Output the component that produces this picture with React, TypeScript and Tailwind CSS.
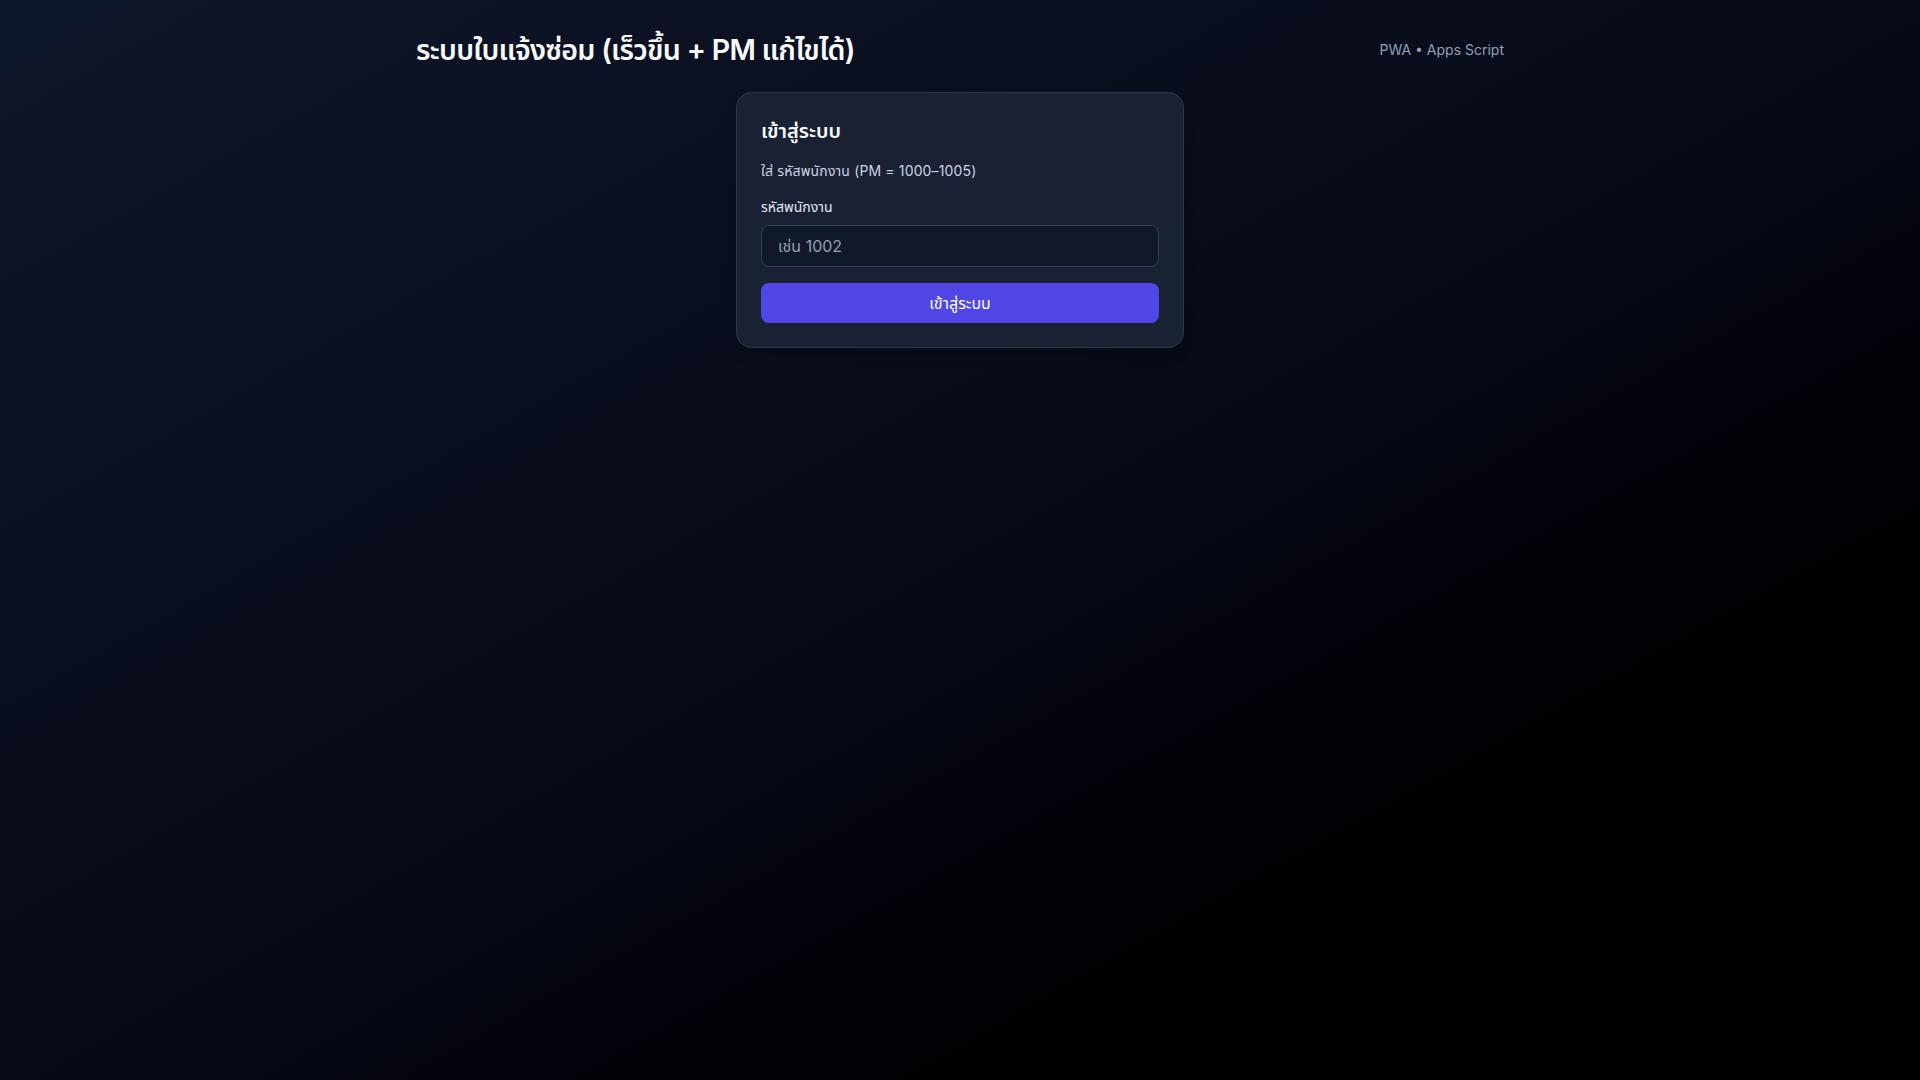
export default function App() {
  return (
    <div
      className="min-h-screen w-full bg-linear-to-br from-[#0f172a] via-[#070a18] to-black text-slate-100"
      style={{ fontFamily: 'Inter, "Noto Sans", "Noto Sans Thai", sans-serif' }}
    >
      <div className="mx-auto max-w-[1120px] px-4">
        {/* Top bar */}
        <header className="flex items-center justify-between pt-[34px]">
          <h1 className="text-[28.6px] leading-8 font-semibold tracking-tight text-slate-50">
            ระบบใบแจ้งซ่อม (เร็วขึ้น + PM แก้ไขได้)
          </h1>
          <span className="text-sm text-slate-400">PWA • Apps Script</span>
        </header>

        {/* Login card */}
        <div className="mx-auto mt-[26px] w-full max-w-md rounded-2xl border border-slate-700/70 bg-[#1a2132] p-6 shadow-lg">
          <h2 className="text-xl leading-7 font-semibold text-slate-50">เข้าสู่ระบบ</h2>
          <p className="mt-4 text-sm tracking-[0.01em] text-slate-300">ใส่ รหัสพนักงาน (PM = 1000–1005)</p>
          <label className="mt-4 block text-sm font-normal text-slate-200">รหัสพนักงาน</label>
          <input
            type="text"
            placeholder="เช่น 1002"
            className="mt-2 block h-[42px] w-full rounded-lg border border-slate-700 bg-[#111827] px-4 text-base text-slate-100 placeholder:text-slate-400 outline-none"
          />
          <button className="mt-4 h-10 w-full rounded-lg bg-[#4f46e5] text-base text-white">
            เข้าสู่ระบบ
          </button>
        </div>
      </div>
    </div>
  );
}
